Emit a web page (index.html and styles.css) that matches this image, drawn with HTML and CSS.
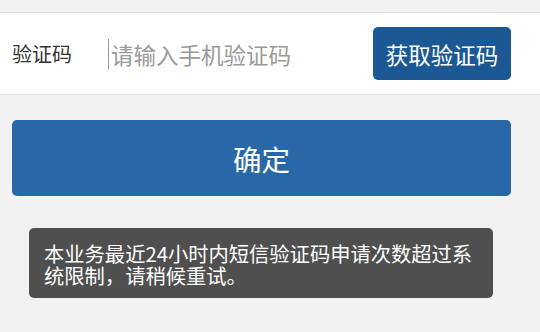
FILE: index.html
```html
<!DOCTYPE html>
<html lang="zh-CN">
<head>
    <meta charset="UTF-8">
    <meta name="viewport" content="width=device-width, initial-scale=1.0">
    <title>验证码</title>
    <link rel="stylesheet" href="styles.css">
</head>
<body>
    <div class="form-row">
        <label class="label">验证码</label>
        <div class="input">
            <span class="caret"></span>
            <span class="placeholder">请输入手机验证码</span>
        </div>
        <button class="code-btn">获取验证码</button>
    </div>
    <button class="submit">确定</button>
    <div class="toast">本业务最近24小时内短信验证码申请次数超过系统限制，请稍候重试。</div>
</body>
</html>
```

FILE: styles.css
```css
body {
    margin: 0;
    background-color: #f2f2f2;
    font-family: "Noto Sans CJK SC", "Noto Sans", sans-serif;
}

.form-row {
    margin-top: 12px;
    height: 81px;
    display: flex;
    align-items: center;
    padding: 0 12px 0 12px;
    background-color: #fff;
    border-top: 1px solid #e1e1e1;
    border-bottom: 1px solid #e1e1e1;
}

.label {
    width: 96px;
    font-size: 20px;
    color: #333;
}

.input {
    display: flex;
    align-items: center;
    flex: 1;
}

.caret {
    width: 1px;
    height: 30px;
    background-color: #999;
    margin-right: 2px;
}

.placeholder {
    font-size: 22.5px;
    color: #9a9a9a;
}

.code-btn {
    width: 138px;
    height: 53px;
    border: none;
    border-radius: 5px;
    background-color: #1c5894;
    color: #fff;
    font-family: inherit;
    font-size: 22.5px;
    padding: 0;
    margin-right: 17px;
}

.submit {
    display: block;
    margin: 25px 0 0 12px;
    width: 499px;
    height: 76px;
    border: none;
    border-radius: 5px;
    background-color: #2968a6;
    color: #fff;
    font-family: inherit;
    font-size: 28.5px;
    padding: 0;
}

.toast {
    margin: 32px 0 0 29px;
    width: 432px;
    padding: 14px 17px 12px 15px;
    border-radius: 5px;
    background-color: #4f4f4f;
    color: #fff;
    font-size: 20.3px;
    line-height: 22px;
    text-spacing-trim: space-all;
}
```
